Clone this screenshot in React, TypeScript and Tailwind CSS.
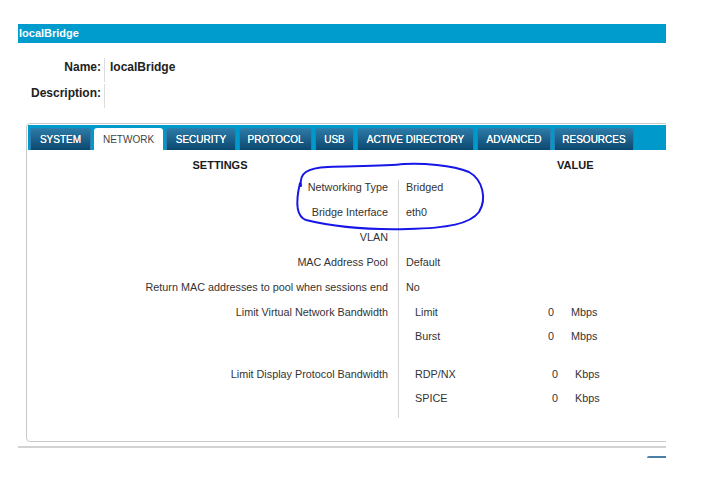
import React from "react";

const tabs = [
  { name: "SYSTEM", w: "w-[61px]" },
  { name: "NETWORK", w: "w-[69px]", active: true },
  { name: "SECURITY", w: "w-[70px]" },
  { name: "PROTOCOL", w: "w-[73px]" },
  { name: "USB", w: "w-[39px]" },
  { name: "ACTIVE DIRECTORY", w: "w-[117px]" },
  { name: "ADVANCED", w: "w-[74px]" },
  { name: "RESOURCES", w: "w-[80px]" },
];

const simpleRows = [
  { label: "Networking Type", value: "Bridged" },
  { label: "Bridge Interface", value: "eth0" },
  { label: "VLAN", value: "" },
  { label: "MAC Address Pool", value: "Default" },
  { label: "Return MAC addresses to pool when sessions end", value: "No" },
];

function SubRow({ name, num, unit, nameW }: { name: string; num: string; unit: string; nameW: string }) {
  return (
    <div className="flex h-[24px] items-center pl-[16px]">
      <span className={nameW}>{name}</span>
      <span className="w-[23px]">{num}</span>
      <span>{unit}</span>
    </div>
  );
}

export default function App() {
  return (
    <div className="relative w-[714px] h-[478px] overflow-hidden bg-white font-['Liberation_Sans',Arial,sans-serif]">
      <div className="ml-[18px] pt-[24px] w-[648px] overflow-hidden">
        {/* title bar */}
        <div className="h-[19px] bg-[#009ccd] px-[1px] text-[11px] font-bold leading-[19px] text-white">
          localBridge
        </div>

        {/* name / description */}
        <div className="mt-[15px] flex flex-col gap-[2px] text-[12px] font-bold text-[#222]">
          <div className="flex h-[24px]">
            <div className="w-[83px] text-right leading-[18px]">Name:</div>
            <div className="ml-[3px] w-px bg-[#dcdcdc]" />
            <div className="pl-[5px] leading-[18px]">localBridge</div>
          </div>
          <div className="flex h-[24px]">
            <div className="w-[83px] text-right leading-[18px]">Description:</div>
            <div className="ml-[3px] w-px bg-[#dcdcdc]" />
            <div className="pl-[5px] leading-[18px]"></div>
          </div>
        </div>

        {/* tab panel */}
        <div className="mt-[15px] ml-[8px] w-[700px] h-[319px] rounded-[4px] border border-[#c9c9c9] p-px">
          <div className="flex h-[25px] gap-[3px] bg-[#0099cc] pl-[2px] pt-[3px]">
            {tabs.map((t) =>
              t.active ? (
                <div
                  key={t.name}
                  className={`${t.w} flex h-[22px] items-center justify-center rounded-t-[3px] bg-white text-[10px] text-[#444]`}
                >
                  {t.name}
                </div>
              ) : (
                <div
                  key={t.name}
                  className={`${t.w} flex h-[22px] items-center justify-center rounded-t-[3px] border border-b-0 border-[#2a7fb0] bg-gradient-to-b from-[#2c7aa6] to-[#0b4870] text-[10px] text-white [text-shadow:0_0_0.4px_#fff]`}
                >
                  {t.name}
                </div>
              )
            )}
          </div>

          <div className="text-[10.8px] text-[#333]">
            <div className="mt-[5px] flex h-[20px] items-center text-[11px] font-bold text-[#1a1a1a]">
              <div className="w-[370px] pl-[14px] text-center">SETTINGS</div>
              <div className="pl-[159px]">VALUE</div>
            </div>

            <div className="flex">
              {/* labels */}
              <div className="w-[370px] pr-[10px] text-right">
                {simpleRows.map((r) => (
                  <div key={r.label} className="flex h-[25px] items-center justify-end">
                    {r.label}
                  </div>
                ))}
                <div className="flex h-[24px] items-center justify-end">Limit Virtual Network Bandwidth</div>
                <div className="h-[38px]" />
                <div className="flex h-[24px] items-center justify-end">Limit Display Protocol Bandwidth</div>
              </div>

              {/* divider */}
              <div className="mt-[5px] mb-[11px] w-px bg-[#d6d6d6]" />

              {/* values */}
              <div className="flex-1">
                {simpleRows.map((r) => (
                  <div key={r.label} className="flex h-[25px] items-center pl-[7px]">
                    {r.value}
                  </div>
                ))}
                <SubRow name="Limit" num="0" unit="Mbps" nameW="w-[133px]" />
                <SubRow name="Burst" num="0" unit="Mbps" nameW="w-[133px]" />
                <div className="h-[14px]" />
                <SubRow name="RDP/NX" num="0" unit="Kbps" nameW="w-[137px]" />
                <SubRow name="SPICE" num="0" unit="Kbps" nameW="w-[137px]" />
                <div className="h-[19px]" />
              </div>
            </div>
          </div>
        </div>

        <div className="mt-[4px] h-[2px] bg-[#d2d2d2]" />
        <div className="ml-auto mt-[8px] h-[2px] w-[19px] rounded-tl-[2px] bg-[#4a7fa8]" />
      </div>

      {/* hand-drawn annotation */}
      <svg className="pointer-events-none absolute left-0 top-0" width="714" height="478">
        <path
          d="M 301 186 C 299 173, 307 168, 328 167 C 360 166, 388 166, 404 164 C 422 163, 452 165, 469 172 C 483 180, 487 199, 479 212 C 470 224, 448 228, 408 229 C 368 230, 330 226, 306 220 C 295 216, 296 200, 300 183"
          fill="none"
          stroke="#1616e6"
          strokeWidth="2"
          strokeLinecap="round"
        />
      </svg>
    </div>
  );
}
